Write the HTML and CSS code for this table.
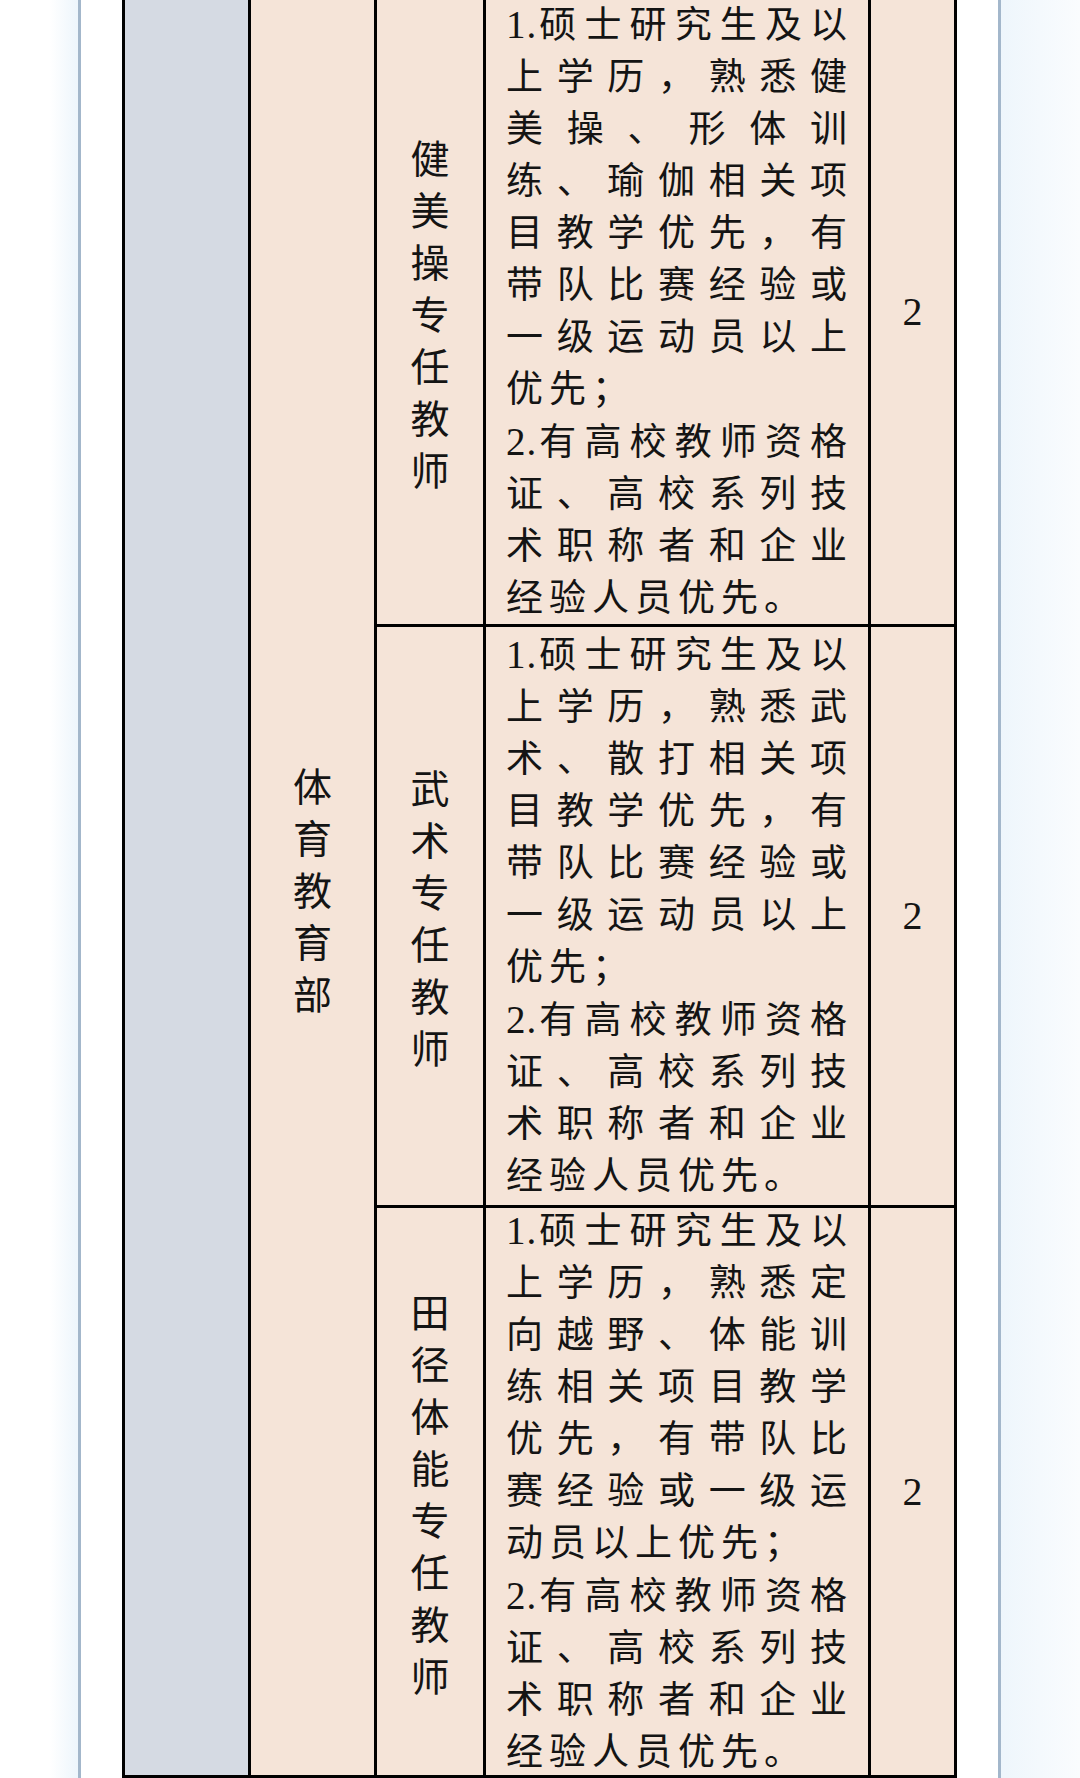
FILE: index.html
```html
<!DOCTYPE html>
<html lang="zh-CN">
<head>
<meta charset="utf-8">
<title>体育教育部 招聘岗位</title>
<link rel="stylesheet" href="styles.css">
</head>
<body>
<div class="page">
  <div class="tbl">
    <div class="cell dept-a"></div>
    <div class="cell dept-b"><span class="vt">体育教育部</span></div>

    <div class="cell pos"><span class="vt">健美操专任教师</span></div>
    <div class="cell req">
      <span class="l"><span class="n">1.</span>硕士研究生及以</span>
      <span class="l">上学历，熟悉健</span>
      <span class="l">美操、形体训</span>
      <span class="l">练、瑜伽相关项</span>
      <span class="l">目教学优先，有</span>
      <span class="l">带队比赛经验或</span>
      <span class="l">一级运动员以上</span>
      <span class="l last">优先；</span>
      <span class="l"><span class="n">2.</span>有高校教师资格</span>
      <span class="l">证、高校系列技</span>
      <span class="l">术职称者和企业</span>
      <span class="l last">经验人员优先。</span>
    </div>
    <div class="cell cnt"><span class="num">2</span></div>

    <div class="cell pos"><span class="vt">武术专任教师</span></div>
    <div class="cell req">
      <span class="l"><span class="n">1.</span>硕士研究生及以</span>
      <span class="l">上学历，熟悉武</span>
      <span class="l">术、散打相关项</span>
      <span class="l">目教学优先，有</span>
      <span class="l">带队比赛经验或</span>
      <span class="l">一级运动员以上</span>
      <span class="l last">优先；</span>
      <span class="l"><span class="n">2.</span>有高校教师资格</span>
      <span class="l">证、高校系列技</span>
      <span class="l">术职称者和企业</span>
      <span class="l last">经验人员优先。</span>
    </div>
    <div class="cell cnt"><span class="num">2</span></div>

    <div class="cell pos"><span class="vt">田径体能专任教师</span></div>
    <div class="cell req">
      <span class="l"><span class="n">1.</span>硕士研究生及以</span>
      <span class="l">上学历，熟悉定</span>
      <span class="l">向越野、体能训</span>
      <span class="l">练相关项目教学</span>
      <span class="l">优先，有带队比</span>
      <span class="l">赛经验或一级运</span>
      <span class="l last">动员以上优先；</span>
      <span class="l"><span class="n">2.</span>有高校教师资格</span>
      <span class="l">证、高校系列技</span>
      <span class="l">术职称者和企业</span>
      <span class="l last">经验人员优先。</span>
    </div>
    <div class="cell cnt"><span class="num">2</span></div>
  </div>
</div>
</body>
</html>
```

FILE: styles.css
```css
html, body {
  margin: 0;
  padding: 0;
}

body {
  width: 1080px;
  height: 1778px;
  overflow: hidden;
  background: linear-gradient(90deg,
    #ffffff 0px, #ffffff 50px, #eef6fc 76px, #eef6fc 78px,
    #ffffff 78px, #ffffff 1001px,
    #eef6fc 1001px, #f4f9fd 1040px, #fafcfe 1080px);
  font-family: "Liberation Serif", "Noto Sans CJK SC", serif;
  color: #141414;
}

.page {
  margin-left: 78px;
  width: 923px;
  height: 1778px;
  background: #ffffff;
  border-left: 3px solid #a3b7cb;
  border-right: 3px solid #a3b7cb;
  padding: 0 41px;
  box-sizing: border-box;
}

.tbl {
  display: grid;
  grid-template-columns: 123px 123px 106px 382px 83px;
  grid-template-rows: 624px 578px 567px;
  gap: 3px;
  padding: 0 3px 3px 3px;
  background: #000000;
  width: 835px;
  box-sizing: border-box;
}

.cell {
  background: #f5e4d8;
  overflow: hidden;
}

.dept-a {
  grid-column: 1;
  grid-row: 1 / 4;
  background: #d5dae3;
}

.dept-b {
  grid-column: 2;
  grid-row: 1 / 4;
  display: flex;
  align-items: center;
  justify-content: center;
}

.pos,
.cnt {
  display: flex;
  align-items: center;
  justify-content: center;
}

.vt {
  display: block;
  width: 1.2em;
  font-family: "Noto Sans CJK SC", sans-serif;
  font-size: 39px;
  line-height: 52px;
  text-align: center;
}

.req {
  display: flex;
  flex-direction: column;
  justify-content: center;
  padding: 0 15px 0 20px;
  font-size: 37px;
  line-height: 52px;
  letter-spacing: 6px;
}

.l {
  display: block;
  white-space: nowrap;
  text-align: justify;
  text-align-last: justify;
}

.l.last {
  text-align-last: left;
}

.n {
  font-family: "Liberation Serif", serif;
  font-size: 39px;
  letter-spacing: 1px;
}

.num {
  font-family: "Liberation Serif", serif;
  font-size: 40px;
  line-height: 1;
}
```
